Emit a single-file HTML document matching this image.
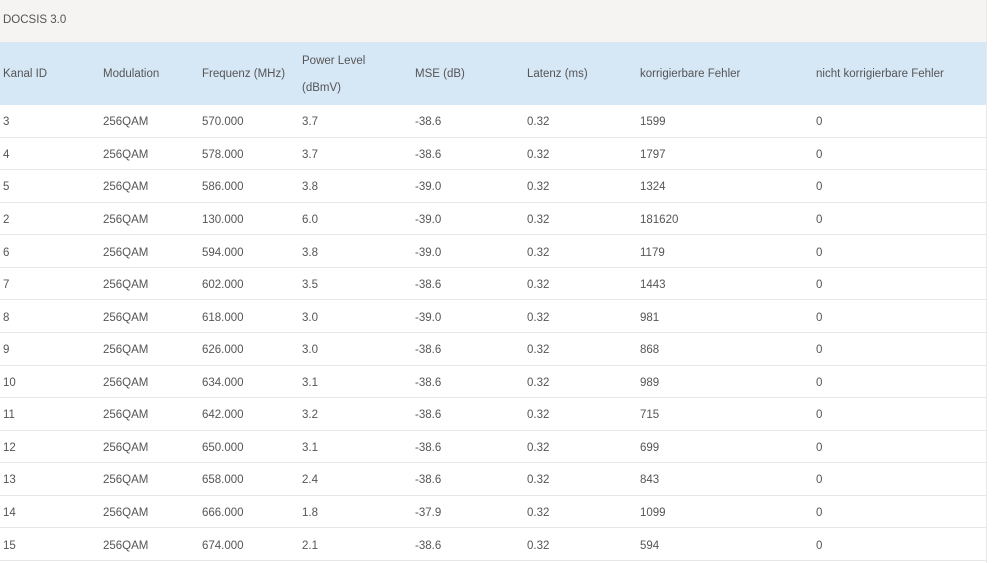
<!DOCTYPE html>
<html><head><style>
body{margin:0;width:999px;height:563px;background:#fff;font-family:"Liberation Sans",sans-serif;font-size:11.5px;color:#555;overflow:hidden;position:relative}
.panel{position:absolute;left:0;top:0;width:986px;height:563px;border-right:1px solid #e8e8e8}
.title{height:42px;background:#f5f4f2;line-height:40px;padding-left:3px}
.r{display:flex;box-sizing:border-box;height:32.57px;border-bottom:1px solid #e6e6e6;align-items:center;padding-top:3px}
.h{background:#d6e7f6;height:63px;border:0;line-height:27px;padding-top:2px}
.r div{padding-left:3px;box-sizing:border-box}
.r div:nth-child(1){width:100px}.r div:nth-child(2){width:99px}.r div:nth-child(3){width:100px}.r div:nth-child(4){width:113px}.r div:nth-child(5){width:112px}.r div:nth-child(6){width:113px}.r div:nth-child(7){width:176px}
</style></head><body><div class="panel">
<div class="title">DOCSIS 3.0</div>
<div class="r h"><div>Kanal ID</div><div>Modulation</div><div>Frequenz (MHz)</div><div>Power Level<br>(dBmV)</div><div>MSE (dB)</div><div>Latenz (ms)</div><div>korrigierbare Fehler</div><div>nicht korrigierbare Fehler</div></div>
<div class="r"><div>3</div><div>256QAM</div><div>570.000</div><div>3.7</div><div>-38.6</div><div>0.32</div><div>1599</div><div>0</div></div>
<div class="r"><div>4</div><div>256QAM</div><div>578.000</div><div>3.7</div><div>-38.6</div><div>0.32</div><div>1797</div><div>0</div></div>
<div class="r"><div>5</div><div>256QAM</div><div>586.000</div><div>3.8</div><div>-39.0</div><div>0.32</div><div>1324</div><div>0</div></div>
<div class="r"><div>2</div><div>256QAM</div><div>130.000</div><div>6.0</div><div>-39.0</div><div>0.32</div><div>181620</div><div>0</div></div>
<div class="r"><div>6</div><div>256QAM</div><div>594.000</div><div>3.8</div><div>-39.0</div><div>0.32</div><div>1179</div><div>0</div></div>
<div class="r"><div>7</div><div>256QAM</div><div>602.000</div><div>3.5</div><div>-38.6</div><div>0.32</div><div>1443</div><div>0</div></div>
<div class="r"><div>8</div><div>256QAM</div><div>618.000</div><div>3.0</div><div>-39.0</div><div>0.32</div><div>981</div><div>0</div></div>
<div class="r"><div>9</div><div>256QAM</div><div>626.000</div><div>3.0</div><div>-38.6</div><div>0.32</div><div>868</div><div>0</div></div>
<div class="r"><div>10</div><div>256QAM</div><div>634.000</div><div>3.1</div><div>-38.6</div><div>0.32</div><div>989</div><div>0</div></div>
<div class="r"><div>11</div><div>256QAM</div><div>642.000</div><div>3.2</div><div>-38.6</div><div>0.32</div><div>715</div><div>0</div></div>
<div class="r"><div>12</div><div>256QAM</div><div>650.000</div><div>3.1</div><div>-38.6</div><div>0.32</div><div>699</div><div>0</div></div>
<div class="r"><div>13</div><div>256QAM</div><div>658.000</div><div>2.4</div><div>-38.6</div><div>0.32</div><div>843</div><div>0</div></div>
<div class="r"><div>14</div><div>256QAM</div><div>666.000</div><div>1.8</div><div>-37.9</div><div>0.32</div><div>1099</div><div>0</div></div>
<div class="r"><div>15</div><div>256QAM</div><div>674.000</div><div>2.1</div><div>-38.6</div><div>0.32</div><div>594</div><div>0</div></div>
</div></body></html>
